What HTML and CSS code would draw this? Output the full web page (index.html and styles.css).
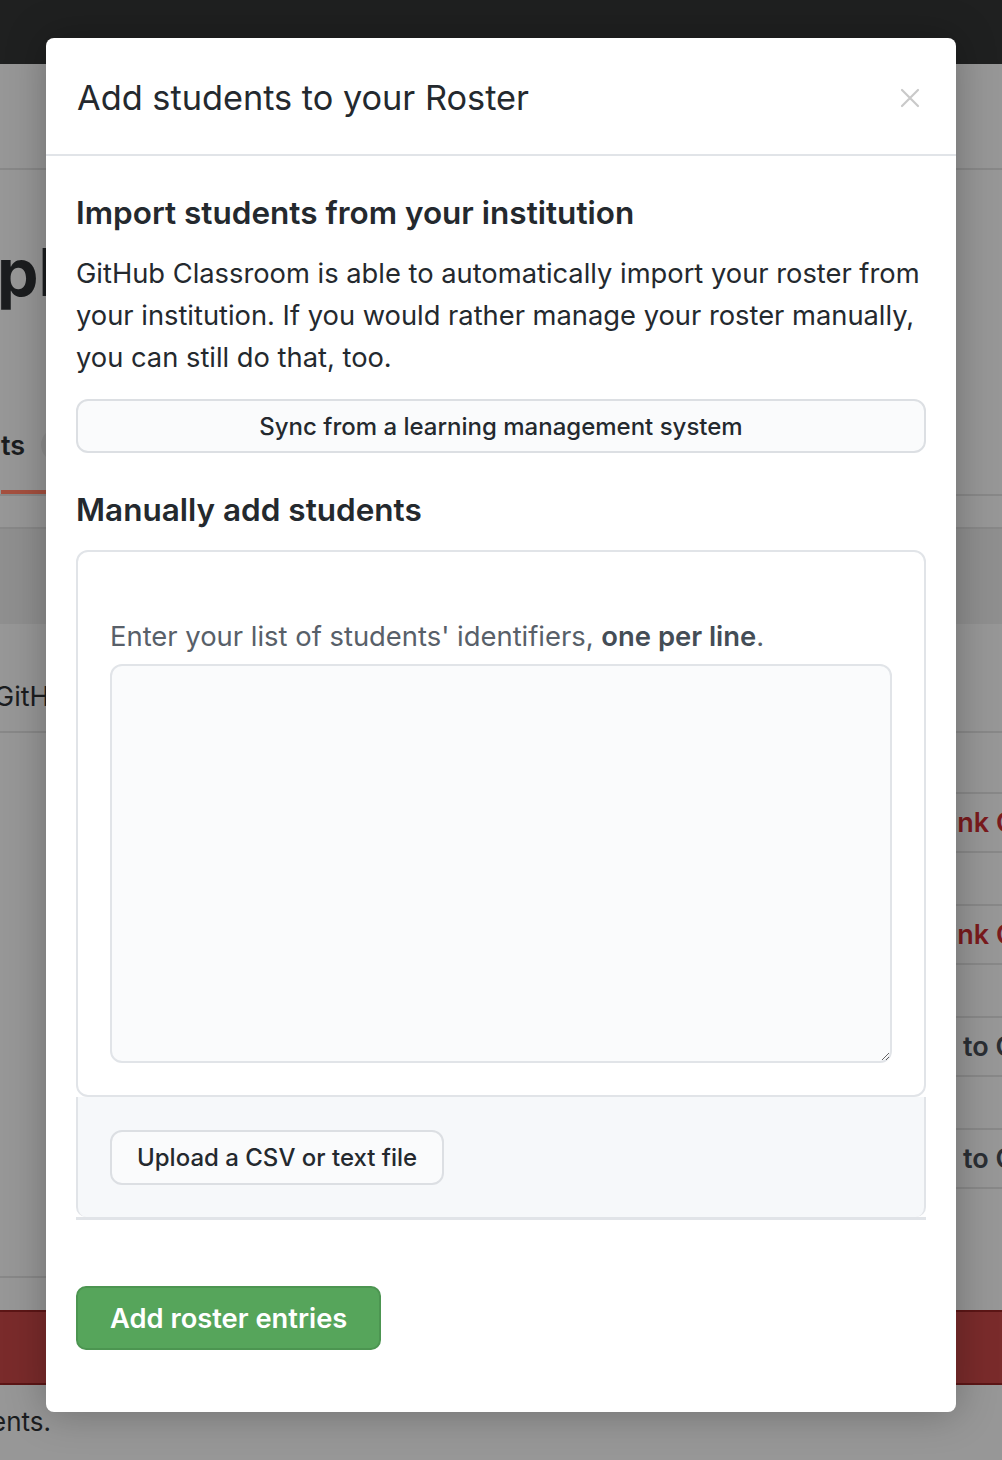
FILE: index.html
```html
<!DOCTYPE html>
<html lang="en">
<head>
<meta charset="utf-8">
<title>Add students to your Roster</title>
<link rel="stylesheet" href="styles.css">
</head>
<body>
<div class="backdrop-page">
  <div class="bg-header"></div>
  <div class="bg-subnav"></div>
  <div class="bg-title">pl</div>
  <div class="bg-tabs">
    <span class="bg-tab">ts <span class="bg-count"></span></span>
  </div>
  <div class="bg-toolbar"></div>
  <div class="bg-row-first">GitH</div>
  <div class="bg-list">
    <div class="bg-col-left"></div>
    <div class="bg-col-right">
      <div class="bg-btn bg-btn-danger">Link GitHub</div>
      <div class="bg-btn bg-btn-danger">Link GitHub</div>
      <div class="bg-btn bg-btn-plain">to GitHub</div>
      <div class="bg-btn bg-btn-plain">to GitHub</div>
    </div>
  </div>
  <div class="bg-alert"></div>
  <div class="bg-foot">ents.</div>
</div>

<div class="modal" role="dialog" aria-labelledby="modal-title">
  <div class="modal-header">
    <h2 class="modal-title" id="modal-title">Add students to your Roster</h2>
    <button class="modal-close" type="button" aria-label="Close">
      <svg width="20" height="20" viewBox="0 0 20 20" aria-hidden="true">
        <path d="M2 2 L18 18 M18 2 L2 18" stroke="#c9c9c9" stroke-width="2.2" stroke-linecap="round" fill="none"/>
      </svg>
    </button>
  </div>
  <div class="modal-body">
    <h3 class="section-title">Import students from your institution</h3>
    <p class="section-text">GitHub Classroom is able to automatically import your roster from your institution. If you would rather manage your roster manually, you can still do that, too.</p>
    <button class="btn btn-block" type="button">Sync from a learning management system</button>

    <h3 class="section-title section-title-manual">Manually add students</h3>
    <div class="roster-card">
      <div class="roster-card-main">
        <label class="roster-label" for="identifiers">Enter your list of students' identifiers, <strong>one per line</strong>.</label>
        <textarea class="roster-textarea" id="identifiers"></textarea>
      </div>
      <div class="roster-card-footer">
        <button class="btn btn-upload" type="button">Upload a CSV or text file</button>
      </div>
    </div>

    <button class="btn-primary" type="button">Add roster entries</button>
  </div>
</div>
</body>
</html>
```

FILE: styles.css
```css
html, body {
  margin: 0;
  padding: 0;
  height: 1460px;
  overflow: hidden;
  background: #979797;
  font-family: Inter, "Noto Sans", "Liberation Sans", sans-serif;
  color: #24292e;
}

/* ---------- dimmed page behind the dialog ---------- */
.backdrop-page {
  display: flex;
  flex-direction: column;
  width: 100%;
  overflow: hidden;
}
.bg-header {
  height: 64px;
  background: #1f2020;
}
.bg-subnav {
  height: 104px;
  border-bottom: 2px solid #888888;
}
.bg-title {
  height: 200px;
  display: flex;
  align-items: center;
  margin-left: -3px;
  font-size: 66px;
  font-weight: 700;
  color: #1b1d1f;
  padding-top: 2px;
}
.bg-tabs {
  height: 122px;
  display: flex;
  align-items: flex-end;
  border-bottom: 2px solid #888888;
}
.bg-tab {
  display: flex;
  align-items: center;
  gap: 16px;
  margin-left: 1px;
  padding: 0 0 28px;
  border-bottom: 4px solid #a5503f;
  font-size: 27px;
  font-weight: 600;
  color: #1b1d1f;
  width: 400px;
  box-sizing: border-box;
}
.bg-count {
  display: inline-block;
  width: 40px;
  height: 34px;
  border-radius: 17px;
  background: #8e8e8e;
}
.bg-toolbar {
  height: 95px;
  margin-top: 31px;
  border-top: 2px solid #888888;
  background: #8f8f8f;
}
.bg-row-first {
  height: 109px;
  display: flex;
  align-items: center;
  padding-top: 38px;
  box-sizing: border-box;
  margin-left: -6px;
  font-size: 27px;
  color: #1b1d1f;
  border-bottom: 2px solid #888888;
}
.bg-list {
  display: flex;
  height: 545px;
}
.bg-col-left {
  flex: 1;
  border-bottom: 2px solid #888888;
}
.bg-col-right {
  width: 96px;
  display: flex;
  flex-direction: column;
  gap: 51px;
  padding-top: 59px;
  box-sizing: border-box;
}
.bg-btn {
  height: 61px;
  box-sizing: border-box;
  border-top: 2px solid #888888;
  border-bottom: 2px solid #888888;
  display: flex;
  align-items: center;
  white-space: nowrap;
  font-size: 27px;
  font-weight: 600;
}
.bg-btn-danger {
  color: #7a1a1d;
  padding-left: 29px;
}
.bg-btn-plain {
  color: #2a2e33;
  padding-left: 57px;
}
.bg-alert {
  margin-top: 32px;
  height: 75px;
  box-sizing: border-box;
  background: #7a2b2b;
  border-top: 2px solid #5c1616;
  border-bottom: 2px solid #5c1616;
}
.bg-foot {
  margin-left: -9px;
  padding-top: 21px;
  font-size: 26px;
  color: #1b1d1f;
}

/* ---------- dialog ---------- */
.modal {
  position: absolute;
  top: 38px;
  left: 46px;
  width: 910px;
  background: #ffffff;
  border-radius: 8px;
  box-shadow: 0 0 40px rgba(0, 0, 0, 0.28);
}
.modal-header {
  height: 116px;
  border-bottom: 2px solid #e1e4e8;
  display: flex;
  align-items: center;
  justify-content: space-between;
  padding: 0 34px 0 31px;
}
.modal-title {
  margin: 0;
  font-size: 34.3px;
  font-weight: 400;
  line-height: 40px;
  padding-top: 3px;
  color: #24292e;
}
.modal-close {
  border: 0;
  background: none;
  padding: 0;
  width: 24px;
  height: 24px;
  display: flex;
  align-items: center;
  justify-content: center;
  margin-top: 4px;
}

.modal-body {
  padding: 38px 30px 62px;
  display: flex;
  flex-direction: column;
  align-items: stretch;
}
.section-title {
  margin: 0;
  font-size: 31.5px;
  font-weight: 600;
  line-height: 38px;
  color: #24292e;
}
.section-text {
  margin: 21px 0 20px;
  font-size: 27.3px;
  line-height: 42px;
  color: #24292e;
}
.btn {
  font-family: inherit;
  background: #fafbfc;
  border: 2px solid #dcdfe3;
  border-radius: 12px;
  color: #24292e;
  font-size: 24px;
  font-weight: 500;
  cursor: pointer;
}
.btn-block {
  height: 54px;
  width: 100%;
}
.section-title-manual {
  margin-top: 38px;
}

.roster-card {
  margin-top: 21px;
  display: flex;
  flex-direction: column;
  border-bottom: 3px solid #e1e4e8;
}
.roster-card-main {
  border: 2px solid #e1e4e8;
  border-radius: 12px;
  padding: 66px 32px 32px;
  display: flex;
  flex-direction: column;
  background: #ffffff;
}
.roster-label {
  font-size: 27.4px;
  line-height: 36px;
  color: #586069;
  margin-bottom: 10px;
}
.roster-label strong {
  font-weight: 600;
  color: #444d56;
}
.roster-textarea {
  height: 399px;
  box-sizing: border-box;
  background: #fafbfc;
  border: 2px solid #e1e4e8;
  border-radius: 12px;
  font-family: inherit;
  font-size: 24px;
  padding: 12px;
  outline: none;
}
.roster-card-footer {
  background: #f6f8fa;
  border-left: 2px solid #e1e4e8;
  border-right: 2px solid #e1e4e8;
  border-bottom-left-radius: 10px;
  border-bottom-right-radius: 10px;
  padding: 33px 32px 32px;
  display: flex;
}
.btn-upload {
  height: 55px;
  padding: 0 25px;
}

.btn-primary {
  align-self: flex-start;
  margin-top: 66px;
  height: 64px;
  padding: 0 32px;
  font-family: inherit;
  font-size: 27.3px;
  font-weight: 600;
  color: #ffffff;
  background: #56a55b;
  border: 2px solid #4c9551;
  border-radius: 10px;
  cursor: pointer;
}
```
